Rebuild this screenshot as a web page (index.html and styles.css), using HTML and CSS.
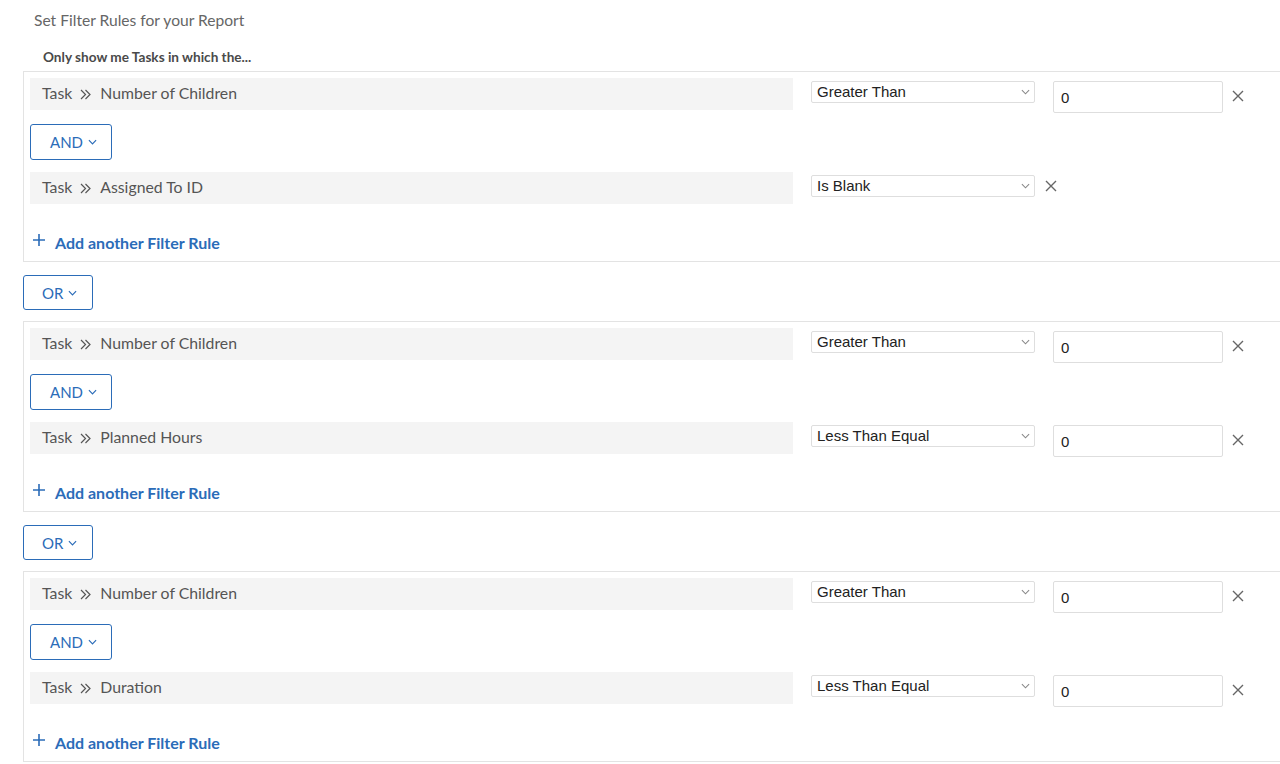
FILE: index.html
```html
<!DOCTYPE html>
<html>
<head>
<meta charset="utf-8">
<link rel="stylesheet" href="styles.css">
</head>
<body>
<div class="page">
  <div class="title">Set Filter Rules for your Report</div>
  <div class="heading">Only show me Tasks in which the...</div>

  <div class="group">
    <div class="rule">
      <div class="field"><span>Task</span><svg class="dbl" viewBox="0 0 11 11"><path d="M1 1l4.5 4.5L1 10M5.5 1l4.5 4.5L5.5 10"/></svg><span>Number of Children</span></div>
      <div class="select">Greater Than<svg class="chev" viewBox="0 0 10 6"><path d="M1 1l4 4 4-4"/></svg></div>
      <div class="input">0</div>
      <svg class="close" viewBox="0 0 12 12"><path d="M1 1l10 10M11 1L1 11"/></svg>
    </div>
    <div class="conj and">AND <svg class="chev" viewBox="0 0 10 6"><path d="M1 1l4 4 4-4"/></svg></div>
    <div class="rule">
      <div class="field"><span>Task</span><svg class="dbl" viewBox="0 0 11 11"><path d="M1 1l4.5 4.5L1 10M5.5 1l4.5 4.5L5.5 10"/></svg><span>Assigned To ID</span></div>
      <div class="select">Is Blank<svg class="chev" viewBox="0 0 10 6"><path d="M1 1l4 4 4-4"/></svg></div>
      <svg class="close near" viewBox="0 0 12 12"><path d="M1 1l10 10M11 1L1 11"/></svg>
    </div>
    <div class="add"><svg class="plus" viewBox="0 0 12 12"><path d="M6 0v12M0 6h12"/></svg>Add another Filter Rule</div>
  </div>

  <div class="conj or">OR <svg class="chev" viewBox="0 0 10 6"><path d="M1 1l4 4 4-4"/></svg></div>

  <div class="group">
    <div class="rule">
      <div class="field"><span>Task</span><svg class="dbl" viewBox="0 0 11 11"><path d="M1 1l4.5 4.5L1 10M5.5 1l4.5 4.5L5.5 10"/></svg><span>Number of Children</span></div>
      <div class="select">Greater Than<svg class="chev" viewBox="0 0 10 6"><path d="M1 1l4 4 4-4"/></svg></div>
      <div class="input">0</div>
      <svg class="close" viewBox="0 0 12 12"><path d="M1 1l10 10M11 1L1 11"/></svg>
    </div>
    <div class="conj and">AND <svg class="chev" viewBox="0 0 10 6"><path d="M1 1l4 4 4-4"/></svg></div>
    <div class="rule">
      <div class="field"><span>Task</span><svg class="dbl" viewBox="0 0 11 11"><path d="M1 1l4.5 4.5L1 10M5.5 1l4.5 4.5L5.5 10"/></svg><span>Planned Hours</span></div>
      <div class="select">Less Than Equal<svg class="chev" viewBox="0 0 10 6"><path d="M1 1l4 4 4-4"/></svg></div>
      <div class="input">0</div>
      <svg class="close" viewBox="0 0 12 12"><path d="M1 1l10 10M11 1L1 11"/></svg>
    </div>
    <div class="add"><svg class="plus" viewBox="0 0 12 12"><path d="M6 0v12M0 6h12"/></svg>Add another Filter Rule</div>
  </div>

  <div class="conj or">OR <svg class="chev" viewBox="0 0 10 6"><path d="M1 1l4 4 4-4"/></svg></div>

  <div class="group">
    <div class="rule">
      <div class="field"><span>Task</span><svg class="dbl" viewBox="0 0 11 11"><path d="M1 1l4.5 4.5L1 10M5.5 1l4.5 4.5L5.5 10"/></svg><span>Number of Children</span></div>
      <div class="select">Greater Than<svg class="chev" viewBox="0 0 10 6"><path d="M1 1l4 4 4-4"/></svg></div>
      <div class="input">0</div>
      <svg class="close" viewBox="0 0 12 12"><path d="M1 1l10 10M11 1L1 11"/></svg>
    </div>
    <div class="conj and">AND <svg class="chev" viewBox="0 0 10 6"><path d="M1 1l4 4 4-4"/></svg></div>
    <div class="rule">
      <div class="field"><span>Task</span><svg class="dbl" viewBox="0 0 11 11"><path d="M1 1l4.5 4.5L1 10M5.5 1l4.5 4.5L5.5 10"/></svg><span>Duration</span></div>
      <div class="select">Less Than Equal<svg class="chev" viewBox="0 0 10 6"><path d="M1 1l4 4 4-4"/></svg></div>
      <div class="input">0</div>
      <svg class="close" viewBox="0 0 12 12"><path d="M1 1l10 10M11 1L1 11"/></svg>
    </div>
    <div class="add"><svg class="plus" viewBox="0 0 12 12"><path d="M6 0v12M0 6h12"/></svg>Add another Filter Rule</div>
  </div>
</div>
</body>
</html>
```

FILE: styles.css
```css
html, body {
  margin: 0;
  padding: 0;
  background: #fff;
  overflow: hidden;
}
body {
  font-family: Lato, "Open Sans", sans-serif;
  color: #555;
}
.page {
  width: 1280px;
  height: 764px;
  overflow: hidden;
}
.title {
  margin-top: 10px;
  padding-left: 34px;
  font-size: 15.6px;
  line-height: 20px;
  color: #666;
}
.heading {
  margin-top: 19px;
  padding-left: 43px;
  font-size: 13.6px;
  line-height: 16px;
  font-weight: 700;
  color: #4a4a4a;
}
.group {
  margin: 6px -30px 0 23px;
  border: 1px solid #e3e3e3;
  border-right: none;
  padding: 6px 0 0 6px;
  display: flex;
  flex-direction: column;
  align-items: flex-start;
}
.rule {
  display: flex;
  align-items: flex-start;
  height: 35px;
}
.field {
  box-sizing: border-box;
  width: 763px;
  height: 32px;
  padding: 0 0 2px 12px;
  background: #f4f4f4;
  font-size: 15.8px;
  line-height: 30px;
  color: #555;
  display: flex;
  align-items: center;
  white-space: pre;
}
.dbl {
  width: 11px;
  height: 11px;
  margin: 2px 9px 0 8px;
  fill: none;
  stroke: #555;
  stroke-width: 1.2;
}
.select {
  margin: 3px 0 0 18px;
  width: 224px;
  height: 22px;
  box-sizing: border-box;
  border: 1px solid #dedede;
  border-radius: 2px;
  padding: 0 4px 0 5px;
  font-family: "Liberation Sans", Arial, sans-serif;
  font-size: 15px;
  line-height: 20px;
  color: #222;
  display: flex;
  align-items: center;
  justify-content: space-between;
}
.select .chev {
  width: 9px;
  height: 6px;
  fill: none;
  stroke: #888;
  stroke-width: 1.2;
}
.input {
  margin: 3px 0 0 18px;
  width: 170px;
  height: 32px;
  box-sizing: border-box;
  border: 1px solid #dedede;
  border-radius: 2px;
  padding-left: 7px;
  font-family: "Liberation Sans", Arial, sans-serif;
  font-size: 15px;
  line-height: 32px;
  color: #222;
}
.close {
  width: 12px;
  height: 12px;
  margin: 12px 0 0 9px;
  fill: none;
  stroke: #666;
  stroke-width: 1.4;
}
.close.near {
  margin: 8px 0 0 10px;
}
.conj {
  box-sizing: border-box;
  height: 36px;
  border: 1px solid #2b6cb8;
  border-radius: 3px;
  color: #2b6cb8;
  font-size: 15px;
  display: flex;
  align-items: center;
}
.conj .chev {
  width: 9px;
  height: 6px;
  margin-left: 5px;
  fill: none;
  stroke: #2b6cb8;
  stroke-width: 1.3;
}
.and {
  width: 82px;
  padding-left: 19px;
  margin: 11px 0 12px;
  line-height: 34px;
}
.or {
  width: 70px;
  height: 35px;
  padding-left: 18px;
  margin: 13px 0 11px 23px;
}
.add {
  margin-top: 18px;
  height: 36px;
  padding-bottom: 2px;
  box-sizing: border-box;
  display: flex;
  align-items: center;
  color: #2b6cb8;
  font-size: 16px;
  font-weight: 700;
}
.plus {
  width: 12px;
  height: 12px;
  margin: -4px 10px 0 3px;
  fill: none;
  stroke: #2b6cb8;
  stroke-width: 1.6;
}
```
